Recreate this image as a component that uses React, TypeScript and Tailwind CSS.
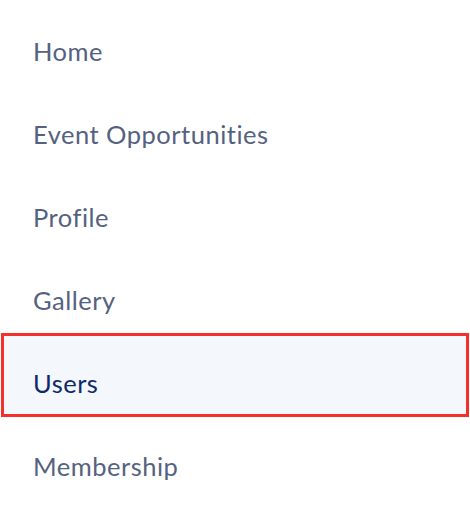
import React from "react";

const items = ["Home", "Event Opportunities", "Profile", "Gallery", "Users", "Membership"];

export default function App() {
  return (
    <div className="w-[470px] h-[519px] bg-white overflow-hidden" style={{ fontFamily: "Lato, 'Noto Sans', sans-serif" }}>
      <ul className="flex flex-col">
        {items.map((it) => {
          const active = it === "Users";
          return (
            <li
              key={it}
              className={
                active
                  ? "h-[84px] mt-[1px] -mb-[2px] mx-[1px] flex items-center pl-[29px] pt-[16px] bg-[#f4f7fb] border-[3px] border-[#f3302a] text-[25.5px] text-[#0f2a6b] tracking-[0.5px]"
                  : "h-[83px] flex items-center pl-[33px] pt-[20px] text-[25.5px] text-[#55627f] tracking-[0.5px]"
              }
            >
              {it}
            </li>
          );
        })}
      </ul>
    </div>
  );
}
